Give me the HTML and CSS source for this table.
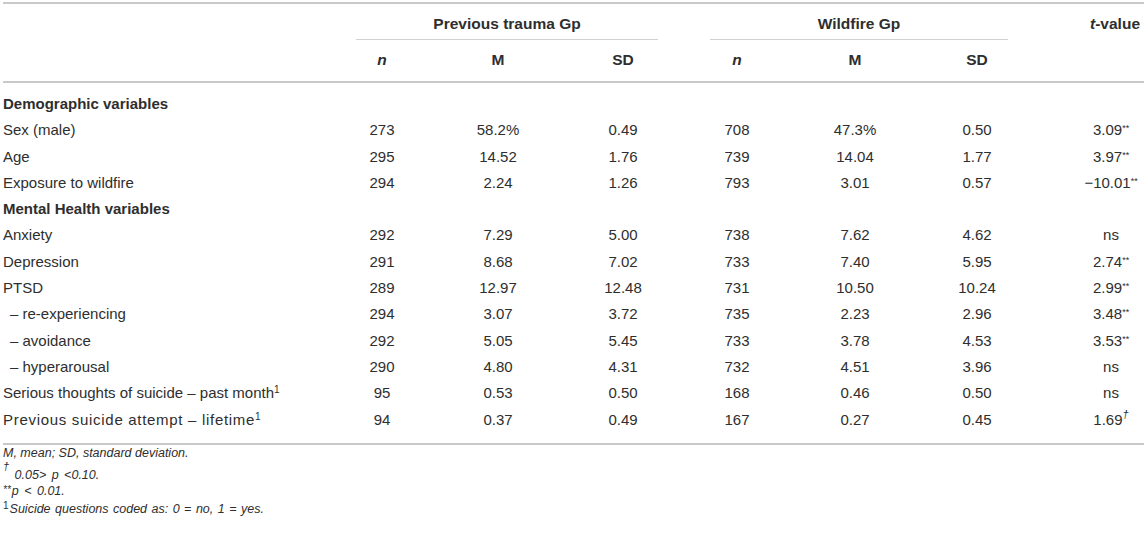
FILE: index.html
```html
<!DOCTYPE html>
<html lang="en">
<head>
    <meta charset="UTF-8">
    <meta name="viewport" content="width=device-width, initial-scale=1.0">
    <title>Previous trauma vs Wildfire group</title>
    <link rel="stylesheet" href="styles.css">
</head>
<body>
    <table class="stats">
        <colgroup>
            <col class="c-label">
            <col class="c-n1">
            <col class="c-m1">
            <col class="c-sd1">
            <col class="c-n2">
            <col class="c-m2">
            <col class="c-sd2">
            <col class="c-t">
        </colgroup>
        <thead>
            <tr class="group-row">
                <th></th>
                <th colspan="3"><div class="group">Previous trauma Gp</div></th>
                <th colspan="3"><div class="group">Wildfire Gp</div></th>
                <th class="tcol thead-t"><i>t</i>-value</th>
            </tr>
            <tr class="sub-row">
                <th></th>
                <th><i>n</i></th>
                <th>M</th>
                <th>SD</th>
                <th><i>n</i></th>
                <th>M</th>
                <th>SD</th>
                <th class="tcol"></th>
            </tr>
        </thead>
        <tbody>
            <tr class="section first">
                <td colspan="8">Demographic variables</td>
            </tr>
            <tr>
                <td class="label">Sex (male)</td>
                <td>273</td><td>58.2%</td><td>0.49</td>
                <td>708</td><td>47.3%</td><td>0.50</td>
                <td class="tcol">3.09<span class="sig">**</span></td>
            </tr>
            <tr>
                <td class="label">Age</td>
                <td>295</td><td>14.52</td><td>1.76</td>
                <td>739</td><td>14.04</td><td>1.77</td>
                <td class="tcol">3.97<span class="sig">**</span></td>
            </tr>
            <tr>
                <td class="label">Exposure to wildfire</td>
                <td>294</td><td>2.24</td><td>1.26</td>
                <td>793</td><td>3.01</td><td>0.57</td>
                <td class="tcol">&minus;10.01<span class="sig">**</span></td>
            </tr>
            <tr class="section">
                <td colspan="8">Mental Health variables</td>
            </tr>
            <tr>
                <td class="label">Anxiety</td>
                <td>292</td><td>7.29</td><td>5.00</td>
                <td>738</td><td>7.62</td><td>4.62</td>
                <td class="tcol">ns</td>
            </tr>
            <tr>
                <td class="label">Depression</td>
                <td>291</td><td>8.68</td><td>7.02</td>
                <td>733</td><td>7.40</td><td>5.95</td>
                <td class="tcol">2.74<span class="sig">**</span></td>
            </tr>
            <tr>
                <td class="label">PTSD</td>
                <td>289</td><td>12.97</td><td>12.48</td>
                <td>731</td><td>10.50</td><td>10.24</td>
                <td class="tcol">2.99<span class="sig">**</span></td>
            </tr>
            <tr>
                <td class="label indent">&ndash; re-experiencing</td>
                <td>294</td><td>3.07</td><td>3.72</td>
                <td>735</td><td>2.23</td><td>2.96</td>
                <td class="tcol">3.48<span class="sig">**</span></td>
            </tr>
            <tr>
                <td class="label indent">&ndash; avoidance</td>
                <td>292</td><td>5.05</td><td>5.45</td>
                <td>733</td><td>3.78</td><td>4.53</td>
                <td class="tcol">3.53<span class="sig">**</span></td>
            </tr>
            <tr>
                <td class="label indent">&ndash; hyperarousal</td>
                <td>290</td><td>4.80</td><td>4.31</td>
                <td>732</td><td>4.51</td><td>3.96</td>
                <td class="tcol">ns</td>
            </tr>
            <tr>
                <td class="label">Serious thoughts of suicide &ndash; past month<sup class="note">1</sup></td>
                <td>95</td><td>0.53</td><td>0.50</td>
                <td>168</td><td>0.46</td><td>0.50</td>
                <td class="tcol">ns</td>
            </tr>
            <tr class="last">
                <td class="label wide">Previous suicide attempt &ndash; lifetime<sup class="note">1</sup></td>
                <td>94</td><td>0.37</td><td>0.49</td>
                <td>167</td><td>0.27</td><td>0.45</td>
                <td class="tcol">1.69<sup class="dag">&dagger;</sup></td>
            </tr>
        </tbody>
    </table>
    <div class="footnotes">
        <p>M, mean; SD, standard deviation.</p>
        <p class="dagger-line"><sup class="dag">&dagger;</sup> 0.05&gt; p &lt;0.10.</p>
        <p class="stars-line"><span class="stars">**</span>p &lt; 0.01.</p>
        <p class="num-line"><sup class="fn">1</sup>Suicide questions coded as: 0 = no, 1 = yes.</p>
    </div>
</body>
</html>
```

FILE: styles.css
```css
html, body {
    overflow: hidden;
}
body {
    margin: 2px 0 0 3px;
    font-family: "Liberation Sans", Arial, sans-serif;
    font-size: 15px;
    color: #2e2e2e;
    background-color: white;
}
.stats {
    width: 1141px;
    table-layout: fixed;
    border-collapse: separate;
    border-spacing: 0;
    border-top: 2px solid #c9c9c9;
    border-bottom: 2px solid #c9c9c9;
}
.c-label { width: 327px; }
.c-n1 { width: 104px; }
.c-m1 { width: 128px; }
.c-sd1 { width: 122px; }
.c-n2 { width: 106px; }
.c-m2 { width: 130px; }
.c-sd2 { width: 114px; }
.c-t { width: 110px; }
th, td {
    padding: 0;
    text-align: center;
    white-space: nowrap;
}
th {
    font-weight: bold;
    font-size: 15.5px;
    line-height: 18px;
}
.group-row th {
    padding-top: 11px;
    vertical-align: top;
}
.group {
    margin: 0 26px;
    padding-bottom: 6px;
    border-bottom: 1px solid #d2d2d2;
}
.sub-row th {
    padding-top: 11px;
    padding-bottom: 12px;
    border-bottom: 2px solid #c9c9c9;
}
.tcol {
    padding-left: 44px;
}
.group-row .thead-t {
    padding-left: 52px;
}
td {
    line-height: 26.3px;
    height: 26.3px;
}
.section td {
    text-align: left;
    font-weight: bold;
}
.section.first td {
    padding-top: 8px;
}
td.label {
    text-align: left;
}
td.indent {
    padding-left: 7px;
}
td.wide {
    letter-spacing: 0.7px;
}
tr.last td {
    padding-bottom: 10px;
}
.sig {
    font-size: 9px;
    line-height: 0;
    vertical-align: 4px;
}
sup.note {
    font-size: 10px;
    line-height: 0;
    vertical-align: 5px;
}
sup.dag {
    font-size: 11px;
    font-style: italic;
    line-height: 0;
    vertical-align: 7px;
}
.footnotes {
    font-size: 12.5px;
    font-style: italic;
    line-height: 16px;
}
.footnotes p {
    margin: 0;
}
.footnotes .dagger-line {
    padding-top: 5px;
    word-spacing: 2px;
}
.footnotes .dagger-line sup.dag {
    vertical-align: 9px;
}
.footnotes .stars-line {
    word-spacing: 2px;
}
.footnotes .stars {
    font-size: 10px;
    line-height: 0;
    vertical-align: 2px;
    margin-right: 1px;
}
.footnotes .num-line {
    margin-top: 2px;
    word-spacing: 1px;
}
sup.fn {
    font-style: normal;
    font-size: 10px;
    line-height: 0;
    vertical-align: 4px;
    margin-right: 1px;
}
```
